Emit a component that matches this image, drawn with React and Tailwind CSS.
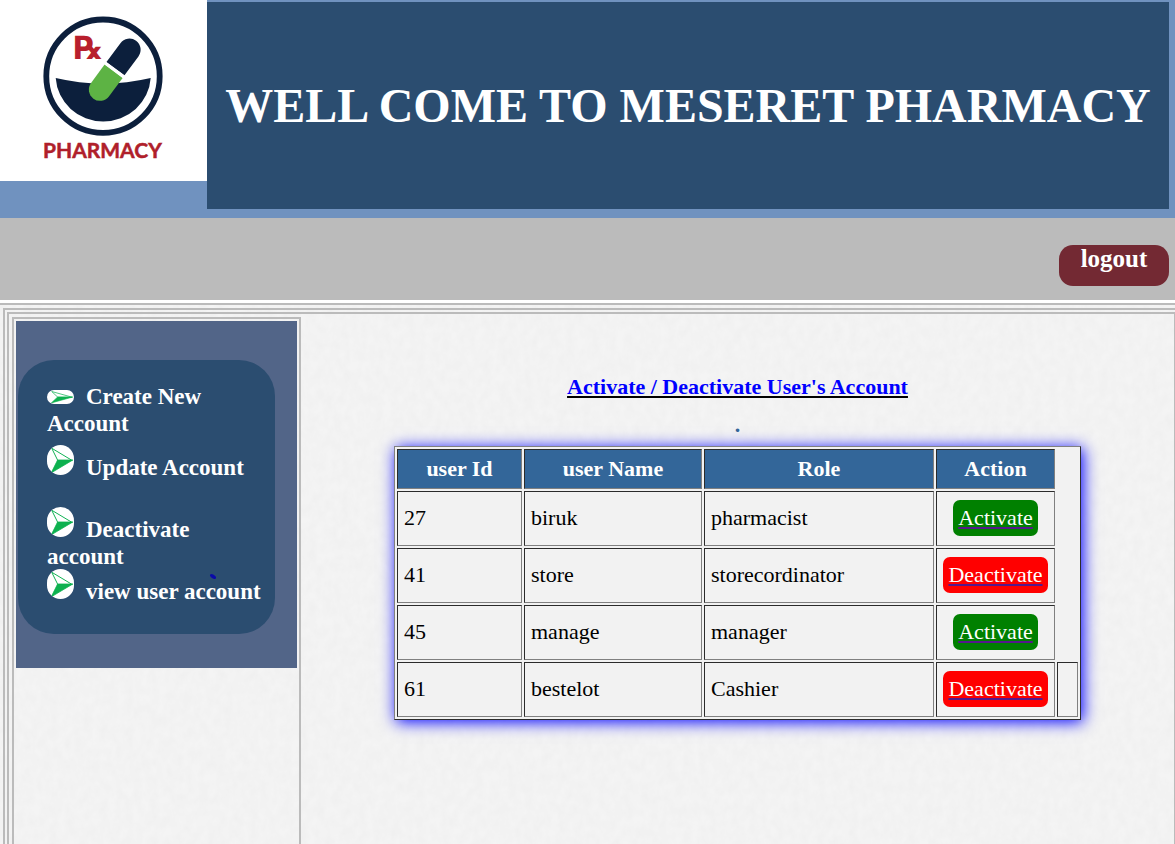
const menu = [
  { label: 'Create New Account', flat: true },
  { label: 'Update Account' },
  { label: 'Deactivate account' },
  { label: 'view user account' },
];

const users = [
  { id: 27, name: 'biruk', role: 'pharmacist', active: false },
  { id: 41, name: 'store', role: 'storecordinator', active: true },
  { id: 45, name: 'manage', role: 'manager', active: false },
  { id: 61, name: 'bestelot', role: 'Cashier', active: true },
];

const cell =
  'border border-t-[#2b2b2b] border-l-[#2b2b2b] border-r-[#808080] border-b-[#808080]';

function Logo() {
  return (
    <svg className="block h-[181px] w-full bg-white" viewBox="0 0 207 181" role="img" aria-label="Pharmacy logo">
      <circle cx="103" cy="76.2" r="56.7" fill="none" stroke="#0c1f3c" strokeWidth="5.8" />
      <path d="M55.7 78 Q103 89 150.7 78 A47.6 46.5 0 0 1 55.7 78Z" fill="#0c1f3c" />
      <g transform="translate(114.3 70.3) rotate(36.4)">
        <path d="M-11.2 -2 V-25.5 A11.2 11.2 0 0 1 11.2 -25.5 V-2Z" fill="#0c1f3c" />
        <path d="M-11.2 1.2 V24 A11.2 11.2 0 0 0 11.2 24 V1.2Z" fill="#5db344" />
        <path d="M-12 -0.4 H12" stroke="#fff" strokeWidth="3" />
      </g>
      <text x="74" y="59" fontSize="32" fontWeight="700" fontFamily="DejaVu Sans, sans-serif" fill="#b81f2d">
        ℞
      </text>
      <text x="43" y="158" fontSize="21" fontWeight="700" fontFamily="Lato, sans-serif" fill="#b01f2b" stroke="#b01f2b" strokeWidth="0.5">
        PHARMACY
      </text>
    </svg>
  );
}

function ArrowIcon({ flat }) {
  return (
    <svg
      className={`mr-3 inline-block w-[27px] rounded-[14px] bg-white align-baseline ${flat ? 'h-[14px]' : 'h-[30px]'}`}
      viewBox="0 0 27 30"
      preserveAspectRatio="none"
      aria-hidden="true"
    >
      <path d="M4.7 3.2 L25.2 15.5 L10.8 15.5 Z" fill="none" stroke="#12b254" strokeWidth="1" />
      <path d="M10.6 15 H25.8 L4.3 27.8 Z" fill="#0db14f" stroke="#0db14f" strokeWidth="0.8" />
    </svg>
  );
}

function PaperTexture() {
  return (
    <svg className="absolute inset-0 -z-10 h-full w-full" aria-hidden="true">
      <filter id="paper">
        <feTurbulence type="fractalNoise" baseFrequency="0.12 0.09" numOctaves="3" seed="4" />
        <feColorMatrix values="0 0 0 0 0.8  0 0 0 0 0.8  0 0 0 0 0.8  0.5 0 0 0 -0.12" />
      </filter>
      <rect width="100%" height="100%" filter="url(#paper)" />
    </svg>
  );
}

function Sidebar() {
  return (
    <aside className="w-[289px] shrink-0 border-2 border-b-0 border-[#bbbbbb] p-0.5">
      <nav className="relative bg-[#526588] pt-[39px] pr-[22px] pb-[34px] pl-0.5">
        <ul className="rounded-[36px] bg-[#2b4d70] pt-[23px] pr-2 pb-[3px] pl-[29px] text-[23px] leading-[27px] font-bold text-white">
          {menu.map((item) => (
            <li key={item.label} className="h-[62px]">
              <a href="#">
                <ArrowIcon flat={item.flat} />
                {item.label}
              </a>
            </li>
          ))}
        </ul>
        <svg className="absolute top-[252px] left-[193px] h-[7px] w-2" viewBox="0 0 8 7" aria-hidden="true">
          <ellipse cx="4" cy="3.5" rx="3.4" ry="1.8" transform="rotate(35 4 3.5)" fill="#0a0aa8" />
        </svg>
      </nav>
    </aside>
  );
}

function UserTable() {
  return (
    <table className="border-separate border-spacing-[2px] border border-t-[#808080] border-r-[#2b2b2b] border-b-[#2b2b2b] border-l-[#808080] bg-[#f2f2f2] text-left shadow-[2px_2px_15px_blue]">
      <thead>
        <tr className="h-10 text-center text-white">
          <th className={`${cell} w-[125px] bg-[#336699]`}>user Id</th>
          <th className={`${cell} w-[178px] bg-[#336699]`}>user Name</th>
          <th className={`${cell} w-[230px] bg-[#336699]`}>Role</th>
          <th className={`${cell} w-[119px] bg-[#336699]`}>Action</th>
        </tr>
      </thead>
      <tbody>
        {users.map((user, i) => (
          <tr key={user.id} className="h-[55px]">
            <td className={`${cell} px-1.5 pb-0.5`}>{user.id}</td>
            <td className={`${cell} px-1.5 pb-0.5`}>{user.name}</td>
            <td className={`${cell} px-1.5 pb-0.5`}>{user.role}</td>
            <td className={`${cell} pb-0.5 text-center`}>
              <a
                href="#"
                className={`inline-block rounded-[7px] px-[5px] leading-9 text-white underline decoration-[#551a8b] decoration-2 underline-offset-2 ${user.active ? 'bg-[red]' : 'bg-[green]'}`}
              >
                {user.active ? 'Deactivate' : 'Activate'}
              </a>
            </td>
            {i === users.length - 1 && <td className={`${cell} w-[21px]`}></td>}
          </tr>
        ))}
      </tbody>
    </table>
  );
}

export default function App() {
  return (
    <div className="flex min-h-screen flex-col overflow-hidden bg-white font-['Liberation_Serif',serif] text-[22px] leading-[26px] text-black">
      <header className="flex bg-[#7092bf] pb-[9px]">
        <div className="w-[207px] shrink-0">
          <Logo />
        </div>
        <div className="mt-0.5 mr-1.5 flex h-[207px] grow items-center justify-center bg-[#2b4d70]">
          <h1 className="text-5xl font-bold whitespace-nowrap text-white">WELL COME TO MESERET PHARMACY</h1>
        </div>
      </header>

      <div className="flex h-[82px] items-start justify-end bg-[#bbbbbb] pt-[27px] pr-1.5">
        <button className="flex h-[41px] w-[110px] justify-center rounded-[14px] bg-[#732933] text-[25px] leading-7 font-bold text-white">
          logout
        </button>
      </div>

      <div className="relative isolate mt-[3px] flex grow flex-col border-t-2 border-[#bbbbbb] bg-[#f4f4f4] pt-[3px] pl-[3px]">
        <PaperTexture />
        <main className="-mr-[5px] flex grow border-6 border-b-0 border-double border-[#bbbbbb] pt-[3px] pl-[3px]">
          <Sidebar />
          <section className="flex grow flex-col items-center pt-[57px]">
            <h2 className="font-bold underline decoration-black decoration-2 underline-offset-2">
              <span className="text-[blue]">Activate / Deactivate User's Account</span>
            </h2>
            <p className="mt-3 mb-2 font-bold text-[#336699]">.</p>
            <UserTable />
          </section>
        </main>
      </div>
    </div>
  );
}
